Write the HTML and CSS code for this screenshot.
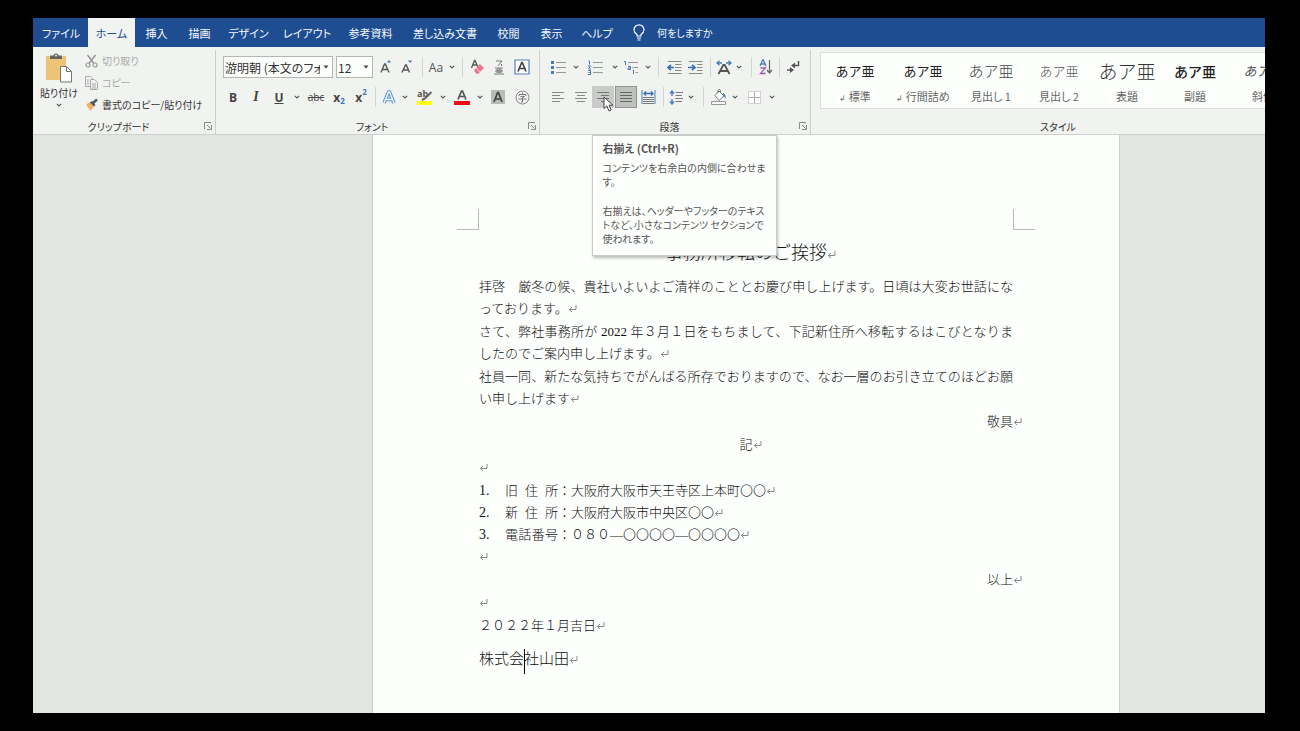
FILE: index.html
```html
<!DOCTYPE html>
<html lang="ja">
<head>
<meta charset="utf-8">
<meta name="viewport" content="width=device-width, initial-scale=1">
<title>事務所移転のご挨拶</title>
<link rel="stylesheet" href="styles.css">
</head>
<body>
<svg width="0" height="0" class="defs" aria-hidden="true">
  <symbol id="chev" viewBox="0 0 6 4"><path d="M.8 .8 3 3 5.200 .8" fill="none" stroke="#555" stroke-width="1.100"/></symbol>
  <symbol id="tri" viewBox="0 0 6 4"><path d="M.5 .5h5L3 3.500z" fill="#444"/></symbol>
  <symbol id="launch" viewBox="0 0 8 8"><path d="M.5 7V.5H7M3 3l3.500 3.500M7.500 3v4.500H3" fill="none" stroke="#888"/></symbol>
  <symbol id="ret" viewBox="0 0 9 9"><path d="M8 1v4.500H1.500M4 3 1.300 5.500 4 8" fill="none" stroke="#888" stroke-width="1"/></symbol>
</svg>
<div class="app">
  <nav class="tabs">
    <a href="#">ファイル</a><a href="#" class="active">ホーム</a><a href="#">挿入</a><a href="#">描画</a><a href="#">デザイン</a><a href="#">レイアウト</a><a href="#">参考資料</a><a href="#">差し込み文書</a><a href="#">校閲</a><a href="#">表示</a><a href="#">ヘルプ</a>
    <a href="#" class="tell"><svg width="12" height="17" viewBox="0 0 12 17"><path d="M4 12V10.500C2.500 9.500 1 8 1 5.800a5 5 0 0 1 10 0C11 8 9.500 9.500 8 10.500V12zM4 14h4M4.500 16h3" fill="none" stroke="#fff" stroke-width="1.200"/></svg>何をしますか</a>
  </nav>

  <div class="ribbon">
    <section class="group clipboard">
      <div class="clip-body">
        <button class="paste"><svg width="28" height="30" viewBox="0 0 28 30"><rect x="1" y="3" width="20" height="24" rx="1" fill="#ecc477"/><path d="M5 6V2.500h3.500a2.500 2 0 0 1 5 0H17V6z" fill="#666"/><circle cx="11" cy="2.500" r="1" fill="#eee"/><path d="M15.500 13.500h6l5 5v10.500h-11z" fill="#fff" stroke="#777"/><path d="M21.500 13.500v5h5" fill="none" stroke="#777"/></svg><span>貼り付け</span><svg width="6" height="4"><use href="#chev"/></svg></button>
        <div class="clip-list">
          <button class="dim"><svg width="13" height="14" viewBox="0 0 13 14"><path d="M2.500 1 9 9.500M10.500 1 4 9.500" stroke="#999" stroke-width="1.600"/><circle cx="3" cy="11" r="2" fill="none" stroke="#999" stroke-width="1.200"/><circle cx="10" cy="11" r="2" fill="none" stroke="#999" stroke-width="1.200"/></svg>切り取り</button>
          <button class="dim"><svg width="13" height="14" viewBox="0 0 13 14"><path d="M.5.500h5l2 2v8h-7z" fill="none" stroke="#aaa"/><path d="M5.500 3.500h4l3 3v7h-7z" fill="#f1f3f1" stroke="#aaa"/><path d="M7 8h4M7 10h4M7 12h4M2 4h2M2 6h2M2 8h2" fill="none" stroke="#aaa"/></svg>コピー</button>
          <button><svg width="13" height="14" viewBox="0 0 13 14"><path d="M1 6.500 5 4l4 4.500L5.500 13z" fill="#efb064"/><path d="M5 4.500 7 3l3.500 4L9 8.500z" fill="#555"/><path d="M8 5 12 1.500" stroke="#555" stroke-width="2.500"/></svg>書式のコピー/貼り付け</button>
        </div>
      </div>
      <footer><span>クリップボード</span><button aria-label="クリップボードの設定"><svg width="8" height="8"><use href="#launch"/></svg></button></footer>
    </section>

    <section class="group font">
      <div class="row font-1">
        <div class="combo face"><select aria-label="フォント"><option>游明朝 (本文のフォント)</option></select><svg width="6" height="4"><use href="#tri"/></svg></div>
        <div class="combo size"><select aria-label="フォント サイズ"><option>12</option></select><svg width="6" height="4"><use href="#tri"/></svg></div>
        <button aria-label="拡大"><svg width="14" height="16" viewBox="0 0 14 16"><path d="M2 13.500 5.500 5h.8L10 13.500M3.300 10.500h5.300" fill="none" stroke="#555" stroke-width="1.400"/><path d="M8 3.500 10 1l2 2.500z" fill="#3f75b5"/></svg></button>
        <button aria-label="縮小"><svg width="14" height="16" viewBox="0 0 14 16"><path d="M2 13.500 5.500 6h.8L9.500 13.500M3.300 11h5" fill="none" stroke="#555" stroke-width="1.400"/><path d="M8 1.500h4L10 4z" fill="#3f75b5"/></svg></button>
        <i class="sep"></i>
        <button class="aa">Aa<svg width="6" height="4"><use href="#chev"/></svg></button>
        <i class="sep"></i>
        <button aria-label="書式クリア"><svg width="15" height="16" viewBox="0 0 15 16"><path d="M1.500 9 4.500 1.500h.5L8 8M2.700 6h4" fill="none" stroke="#555" stroke-width="1.300"/><path d="m4 11 6-6 4 4-6 6-2-.5z" fill="#e8788d"/><path d="m6 9 4 4" stroke="#f9cdd5"/></svg></button>
        <button aria-label="ルビ"><svg width="10" height="16" viewBox="0 0 10 16"><path d="M2 2h6L4 7M7.500 5v2M1 9h8M2 11h6v2H2zM4 9v5M6 9v5M0 15h10" fill="none" stroke="#777"/></svg></button>
        <button aria-label="囲み線"><svg width="16" height="16" viewBox="0 0 16 16"><path d="M1 1h14v14H1z" fill="#fff" stroke="#5480b6" stroke-width="1.200"/><path d="M4 12.500 7.700 3.500h.6L12 12.500M5.500 9.500h5" fill="none" stroke="#444" stroke-width="1.700"/></svg></button>
      </div>
      <div class="row font-2">
        <button class="b">B</button><button class="it">I</button><button class="un">U</button>
        <button aria-label="下線の種類"><svg width="6" height="4"><use href="#chev"/></svg></button>
        <button class="strike">abc</button><button class="x">x<sub>2</sub></button><button class="x">x<sup>2</sup></button>
        <i class="sep"></i>
        <button aria-label="文字の効果"><svg width="14" height="15" viewBox="0 0 14 15"><path d="M2 13 6.500 2h1L12 13M4 9.500h6" fill="none" stroke="#5f97d6" stroke-width="3.400" stroke-linejoin="round"/><path d="M2 13 6.500 2h1L12 13M4 9.500h6" fill="none" stroke="#f5f9ff" stroke-width="1.300"/></svg></button>
        <button aria-label="効果の種類"><svg width="6" height="4"><use href="#chev"/></svg></button>
        <button class="hl" aria-label="蛍光ペン"><svg width="16" height="18" viewBox="0 0 16 18"><rect y="13" width="15" height="4" fill="#ffff12"/><text x="0" y="9" font-size="9" font-weight="700" fill="#555">ab</text><path d="M14.500 4 8 10.500 5 12" fill="none" stroke="#666" stroke-width="2"/></svg></button>
        <button aria-label="蛍光ペンの色"><svg width="6" height="4"><use href="#chev"/></svg></button>
        <button aria-label="フォントの色"><svg width="16" height="16" viewBox="0 0 16 16"><rect x="0" y="12" width="16" height="4" fill="#ef0b14"/><path d="M4 10.500 7.500 2h1L12 10.500M5.500 7.500h5" fill="none" stroke="#555" stroke-width="1.700"/></svg></button>
        <button aria-label="色の選択"><svg width="6" height="4"><use href="#chev"/></svg></button>
        <button aria-label="網かけ"><svg width="14" height="14" viewBox="0 0 14 14"><path d="M0 0h14v14H0z" fill="#b9bbb9"/><path d="M3 12 6.600 2.500h.8L11 12M4.500 9h5" fill="none" stroke="#444" stroke-width="1.700"/></svg></button>
        <button aria-label="囲い文字"><svg width="15" height="15" viewBox="0 0 15 15"><circle cx="7.500" cy="7.500" r="6.500" fill="none" stroke="#888"/><path d="M7.500 2.500V4M4 6V4.500h7V6M5.500 6.500h4L7.500 8v4H6M3.500 9h8" fill="none" stroke="#777"/></svg></button>
      </div>
      <footer><span>フォント</span><button aria-label="フォントの設定"><svg width="8" height="8"><use href="#launch"/></svg></button></footer>
    </section>

    <section class="group para">
      <div class="row para-1">
        <button aria-label="箇条書き"><svg width="15" height="15" viewBox="0 0 15 15"><path d="M0 1h3v3H0zM0 6h3v3H0zM0 11h3v3H0z" fill="#4a7ab5"/><path d="M5 2.500h10M5 7.500h10M5 12.500h10" stroke="#999"/></svg></button>
        <button aria-label="行頭文字"><svg width="6" height="4"><use href="#chev"/></svg></button>
        <button aria-label="段落番号"><svg width="15" height="15" viewBox="0 0 15 15"><path d="M.5 1h1v3.500M0 6h2.500L.5 9H3M0 10.500h2.500v4H0M.5 12.500h2" fill="none" stroke="#4a7ab5"/><path d="M5 2.500h10M5 7.500h10M5 12.500h10" stroke="#999"/></svg></button>
        <button aria-label="番号の種類"><svg width="6" height="4"><use href="#chev"/></svg></button>
        <button aria-label="アウトライン"><svg width="16" height="15" viewBox="0 0 16 15"><path d="M0 1.500h1.500V5M4 6.500h2.500v3H4V8h2M9.500 10v4" fill="none" stroke="#4a7ab5"/><path d="M4 2.500h10M8.500 7.500H14M11.500 12.500H14" stroke="#999"/></svg></button>
        <button aria-label="アウトラインの種類"><svg width="6" height="4"><use href="#chev"/></svg></button>
        <i class="sep"></i>
        <button aria-label="インデントを減らす"><svg width="15" height="13" viewBox="0 0 15 13"><path d="M1 .5h13.500M8 3.500h6.500M8 6.500h6.500M8 9.500h6.500M1 12.500h13.500" stroke="#888"/><path d="M7 6.500H2M4 3.800 1 6.500l3 2.700" fill="none" stroke="#356fb4" stroke-width="1.700"/></svg></button>
        <button aria-label="インデントを増やす"><svg width="15" height="13" viewBox="0 0 15 13"><path d="M1 .5h13.500M9 3.500h5.500M9 6.500h5.500M9 9.500h5.500M1 12.500h13.500" stroke="#888"/><path d="M0 6.500h6M4 3.800 7 6.500 4 9.200" fill="none" stroke="#356fb4" stroke-width="1.700"/></svg></button>
        <i class="sep"></i>
        <button aria-label="拡張書式"><svg width="16" height="15" viewBox="0 0 16 15"><path d="M2.500 14 7.300 5h1.400L13.500 14M4.500 11h7" fill="none" stroke="#555" stroke-width="1.800"/><path d="M6 3H2M3.500.8 1 3l2.500 2.200M10 3h4M12.500.8 15 3l-2.500 2.200" fill="none" stroke="#4a7fbd" stroke-width="1.400"/></svg></button>
        <button aria-label="拡張書式の種類"><svg width="6" height="4"><use href="#chev"/></svg></button>
        <i class="sep"></i>
        <button aria-label="並べ替え"><svg width="14" height="16" viewBox="0 0 14 16"><path d="M1 7 3.700 1h.6L7 7M2 5h4" fill="none" stroke="#4a7fbd" stroke-width="1.300"/><path d="M1.500 9h5L1.500 14.500h5" fill="none" stroke="#9a5cb5" stroke-width="1.300"/><path d="M10.500 1v13M8 11l2.500 3 2.500-3" fill="none" stroke="#666" stroke-width="1.200"/></svg></button>
        <i class="sep"></i>
        <button aria-label="編集記号"><svg width="14" height="14" viewBox="0 0 14 14"><path d="M12.500 1v4.500H8" fill="none" stroke="#555" stroke-width="1.500"/><path d="M9 2.500v6l-4-3zM4 7v6l4-3z" fill="#555"/><path d="M1 10h4" stroke="#555" stroke-width="1.500"/></svg></button>
      </div>
      <div class="row para-2">
        <button aria-label="左揃え"><svg width="12" height="10" viewBox="0 0 12 10"><path d="M0 .5h12M0 3.500h8M0 6.500h12M0 9.500h8" stroke="#888"/></svg></button>
        <button aria-label="中央揃え"><svg width="12" height="10" viewBox="0 0 12 10"><path d="M0 .5h12M2 3.500h8M0 6.500h12M2 9.500h8" stroke="#888"/></svg></button>
        <div class="tip-anchor">
          <button class="hover" aria-label="右揃え" aria-describedby="tip"><svg width="12" height="10" viewBox="0 0 12 10"><path d="M0 .5h12M4 3.500h8M0 6.500h12M4 9.500h8" stroke="#777"/></svg></button>
          <svg class="pointer" width="11" height="16" viewBox="0 0 11 16"><path d="M1 1v11.500l2.800-2.600L6 15l2.200-1L6 9.200h4z" fill="#fff" stroke="#444"/></svg>
          <div class="tip" id="tip" role="tooltip">
            <b>右揃え (Ctrl+R)</b>
            <p>コンテンツを右余白の内側に合わせま<br>す。</p>
            <p>右揃えは、ヘッダーやフッターのテキス<br>トなど、小さなコンテンツ セクションで<br>使われます。</p>
          </div>
        </div>
        <button class="on" aria-label="両端揃え"><svg width="12" height="10" viewBox="0 0 12 10"><path d="M0 .5h12M0 3.500h12M0 6.500h12M0 9.500h12" stroke="#666"/></svg></button>
        <button aria-label="均等割り付け"><svg width="15" height="15" viewBox="0 0 15 15"><path d="M1 0v14M14 0v14" stroke="#4a7fbd"/><path d="M3 3.500h9M5 1.500l-2 2 2 2M10 1.500l2 2-2 2" fill="none" stroke="#356fb4" stroke-width="1.300"/><path d="M2 7.500h11M2 9.500h11M2 11.500h11M2 13.500h11" stroke="#777"/></svg></button>
        <i class="sep"></i>
        <button aria-label="行間"><svg width="14" height="15" viewBox="0 0 14 15"><path d="M3 1v5M3 9v5M1 3.500 3 1l2 2.500M1 11.500 3 14l2-2.500" fill="none" stroke="#4a7fbd" stroke-width="1.400"/><path d="M6.500 2.500H14M6.500 5.500H13M6.500 8.500H14M6.500 11.500H13" stroke="#777"/></svg></button>
        <button aria-label="行間の種類"><svg width="6" height="4"><use href="#chev"/></svg></button>
        <i class="sep"></i>
        <button aria-label="塗りつぶし"><svg width="16" height="16" viewBox="0 0 16 16"><path d="M4 6.500 8 2l5 5-5 4.500zM7 4V1.500a1.300 1.300 0 0 1 2.500 0V4" fill="#fff" stroke="#777"/><path d="M12 4c2.500 1 3 3 2.500 6-1-2-1.500-3-2.500-3z" fill="#4a7fbd"/><path d="M.5 12.500h14v3H.5z" fill="#fff" stroke="#999"/></svg></button>
        <button aria-label="塗りつぶしの色"><svg width="6" height="4"><use href="#chev"/></svg></button>
        <button aria-label="罫線"><svg width="13" height="13" viewBox="0 0 13 13"><path d="M.5.500h12v12H.5z" fill="#fff" stroke="#aaa" stroke-dasharray="1 1"/><path d="M6.500 1v11M1 6.500h11" stroke="#aaa"/></svg></button>
        <button aria-label="罫線の種類"><svg width="6" height="4"><use href="#chev"/></svg></button>
      </div>
      <footer><span>段落</span><button aria-label="段落の設定"><svg width="8" height="8"><use href="#launch"/></svg></button></footer>
    </section>

    <section class="group styles">
      <div class="gallery">
        <button><span class="sample">あア亜</span><span><small>↲</small> 標準</span></button>
        <button><span class="sample">あア亜</span><span><small>↲</small> 行間詰め</span></button>
        <button><span class="sample head">あア亜</span><span>見出し 1</span></button>
        <button><span class="sample light">あア亜</span><span>見出し 2</span></button>
        <button><span class="sample title">あア亜</span><span>表題</span></button>
        <button><span class="sample subtitle">あア亜</span><span>副題</span></button>
        <button><span class="sample slant">あア亜</span><span>斜体</span></button>
      </div>
      <footer><span>スタイル</span></footer>
    </section>
  </div>

  <main class="workspace">
    <article class="page">
      <div class="crops"><i class="crop left"></i><i class="crop right"></i></div>
      <h1>事務所移転のご挨拶<svg class="ret"><use href="#ret"/></svg></h1>
      <p>拝啓　厳冬の候、貴社いよいよご清祥のこととお慶び申し上げます。日頃は大変お世話になっております。<svg class="ret"><use href="#ret"/></svg></p>
      <p>さて、弊社事務所が 2022 年３月１日をもちまして、下記新住所へ移転するはこびとなりましたのでご案内申し上げます。<svg class="ret"><use href="#ret"/></svg></p>
      <p>社員一同、新たな気持ちでがんばる所存でおりますので、なお一層のお引き立てのほどお願い申し上げます<svg class="ret"><use href="#ret"/></svg></p>
      <p class="end">敬具<svg class="ret"><use href="#ret"/></svg></p>
      <p class="mid">記<svg class="ret"><use href="#ret"/></svg></p>
      <p><svg class="ret"><use href="#ret"/></svg></p>
      <ol>
        <li><span class="num">1.</span><span><span class="spread">旧 住 所</span>：大阪府大阪市天王寺区上本町〇〇<svg class="ret"><use href="#ret"/></svg></span></li>
        <li><span class="num">2.</span><span><span class="spread">新 住 所</span>：大阪府大阪市中央区〇〇<svg class="ret"><use href="#ret"/></svg></span></li>
        <li><span class="num">3.</span><span><span class="spread">電話番号</span>：０８０―〇〇〇〇―〇〇〇〇<svg class="ret"><use href="#ret"/></svg></span></li>
      </ol>
      <p><svg class="ret"><use href="#ret"/></svg></p>
      <p class="end">以上<svg class="ret"><use href="#ret"/></svg></p>
      <p><svg class="ret"><use href="#ret"/></svg></p>
      <p>２０２２年１月吉日<svg class="ret"><use href="#ret"/></svg></p>
      <p class="sign">株式会<span class="caret"></span>社山田<svg class="ret"><use href="#ret"/></svg></p>
    </article>
  </main>
</div>
</body>
</html>
```
FILE: styles.css
```css
* { box-sizing: border-box; }
html, body { height: 100%; }
body {
  margin: 0;
  padding: 18px 35px 18px 33px;
  background: #000;
  font-family: "Noto Sans CJK JP", "Noto Sans", sans-serif;
  font-size: 11px;
  color: #333;
}
.defs { position: absolute; }
button, select { font: inherit; color: inherit; margin: 0; }
button { border: 0; padding: 0; background: none; }
.app {
  height: 100%;
  display: flex;
  flex-direction: column;
  overflow: hidden;
  background: #e3e5e3;
}

/* Tab strip */
.tabs {
  flex: none;
  display: grid;
  grid-template-columns: 54px 47px 43px 43px 55px 62px 65px 84px 43px 43px 48px auto;
  height: 29px;
  padding-left: 1px;
  background: #1e4e91;
  font-feature-settings: "palt";
}
.tabs a {
  display: flex;
  align-items: center;
  justify-content: center;
  color: #f4f7fb;
  text-decoration: none;
  white-space: nowrap;
}
.tabs .active { background: #f1f3f1; color: #1e4e91; }
.tabs .tell { justify-content: flex-start; gap: 12px; padding-left: 12px; font-size: 10px; }

/* Ribbon */
.ribbon {
  flex: none;
  display: flex;
  height: 88px;
  padding-top: 3px;
  background: #f1f3f1;
  border-bottom: 1px solid #cfd1cf;
}
.group {
  flex: none;
  display: flex;
  flex-direction: column;
  border-right: 1px solid #cdcfcd;
}
.group footer {
  display: flex;
  align-items: center;
  height: 16px;
  margin-top: auto;
  font-size: 10px;
  font-feature-settings: "palt";
}
.group footer span { flex: 1; text-align: center; }
.group footer button { width: 11px; display: flex; }
.clipboard { width: 183px; }
.font { width: 324px; }
.para { width: 271px; }
.styles { flex: 1; min-width: 0; border: 0; }

.clip-body { display: flex; font-size: 10px; font-feature-settings: "palt"; }
.paste {
  width: 52px;
  height: 62px;
  padding-top: 3px;
  display: flex;
  flex-direction: column;
  align-items: center;
  gap: 3px;
  line-height: 14px;
  white-space: nowrap;
}
.clip-list { display: flex; flex-direction: column; }
.clip-list button {
  display: flex;
  align-items: center;
  gap: 4px;
  height: 22px;
  line-height: 22px;
  white-space: nowrap;
}
.clip-list .dim { color: #a8aaa8; }

.row { display: grid; height: 30px; align-items: center; }
.row button {
  display: flex;
  align-items: center;
  justify-content: center;
  height: 22px;
}
.font .row { margin-left: 7px; }
.para .row { margin-left: 5px; }
.font-1, .para-1 { margin-top: 2px; }
.font-1 { grid-template-columns: 113px 40px 20px 22px 8px 32px 8px 22px 22px 23px; }
.font-2 { grid-template-columns: 20px 26px 20px 16px 22px 24px 20px 8px 19px 14px 26px 10px 28px 8px 28px 21px; }
.para-1 { grid-template-columns: 26px 10px 28px 12px 22px 10px 11px 20px 23px 6px 22px 8px 16px 14px 12px 16px; }
.para-2 { grid-template-columns: 26px 19px 25px 22px 23px 6px 20px 10px 14px 17px 16px 22px 14px; }
.sep { justify-self: center; width: 1px; height: 20px; background: #d3d5d3; }
.combo { position: relative; }
.combo select {
  display: block;
  width: 100%;
  height: 22px;
  padding: 0 12px 0 1px;
  border: 1px solid #b5b7b5;
  border-radius: 0;
  background: #fdfffd;
  appearance: none;
  font-size: 12px;
  font-feature-settings: "palt";
}
.combo svg { position: absolute; right: 4px; top: 9px; }
.face { width: 110px; }
.size { width: 37px; }
.aa { gap: 6px; font-family: "Open Sans", sans-serif; font-size: 12px; color: #555; }
.b, .it, .un, .x, .strike { font-family: "Open Sans", sans-serif; font-size: 12px; font-weight: 700; color: #444; }
.row .it { font-family: "Liberation Serif", serif; font-style: italic; font-size: 14px; }
.un { text-decoration: underline; }
.row .strike { text-decoration: line-through; font-size: 10px; font-weight: 400; }
.x sub, .x sup { font-size: 8px; color: #3f75b5; line-height: 8px; }
.x sub { align-self: flex-end; padding-bottom: 3px; }
.x sup { align-self: flex-start; padding-top: 2px; }
.hl svg { overflow: visible; }
.hl text { font-family: "Open Sans", sans-serif; }
.tip-anchor { position: relative; justify-self: center; }
.tip-anchor .hover { width: 22px; background: #c9cbc9; }
.row .on { background: #bfc1bf; border: 1px solid #929492; }
.pointer { position: absolute; left: 11px; top: 10px; z-index: 3; }
.tip {
  position: absolute;
  z-index: 2;
  left: 0;
  top: 49px;
  width: 185px;
  height: 121px;
  padding: 5px 10px;
  background: #fdfffd;
  border: 1px solid #c8cac8;
  box-shadow: 1px 2px 3px #0004;
  color: #555;
  font-size: 10px;
  line-height: 14px;
  white-space: nowrap;
  font-feature-settings: "palt";
}
.tip b { display: block; margin-bottom: 6px; font-size: 11px; }
.tip p { margin: 0 0 15px; }

.gallery {
  display: flex;
  height: 57px;
  margin: 2px 0 0 9px;
  overflow: hidden;
  background: #fdfffd;
  border: 1px solid #dcdedc;
  border-right: 0;
}
.gallery button {
  flex: none;
  width: 68px;
  display: flex;
  flex-direction: column;
  align-items: center;
  color: #666;
  line-height: 16px;
  white-space: nowrap;
  font-feature-settings: "palt";
}
.gallery small { font-size: 8px; }
.sample { height: 35px; line-height: 36px; font-size: 13px; color: #222; font-feature-settings: normal; }
.sample.head { font-size: 15px; font-weight: 300; color: #444; }
.sample.light { font-weight: 300; color: #555; }
.sample.title { font-size: 19px; font-weight: 300; color: #333; }
.sample.subtitle { font-size: 14px; font-weight: 500; }
.sample.slant { font-style: italic; color: #555; }
.styles footer { padding-left: 40px; }

/* Document */
.workspace {
  flex: 1;
  min-height: 0;
  display: grid;
  grid-template-columns: 340fr 746fr 146fr;
}
.page {
  grid-column: 2;
  padding: 74px 106px 0;
  background: #fdfffd;
  box-shadow: 0 0 0 1px #cfd1cf;
  font-family: "Liberation Serif", "Noto Sans CJK JP", serif;
  font-size: 13px;
  font-weight: 300;
  line-height: 22px;
  color: #111;
  text-align: justify;
}
.crops { display: flex; justify-content: space-between; margin: 0 -22px; }
.crop { width: 22px; height: 21px; border: 0 solid #b8bab8; border-bottom-width: 1px; }
.crop.left { border-right-width: 1px; }
.crop.right { border-left-width: 1px; }
.page h1 {
  margin: 5px 0;
  font-size: 18px;
  font-weight: 300;
  line-height: 36px;
  text-align: center;
}
.page p { margin: 0 0 1px; }
.page .end { text-align: right; }
.page .mid { text-align: center; }
.page ol { margin: 0; padding: 0; list-style: none; }
.page li { display: flex; }
.num { width: 26px; font-size: 14px; }
.spread { display: inline-block; width: 53px; text-align: justify; text-align-last: justify; }
.ret { width: 9px; height: 9px; margin-right: -9px; }
.page .sign { font-size: 15px; line-height: 42px; }
.caret { position: relative; }
.caret::after {
  content: "";
  position: absolute;
  left: 0;
  top: -2px;
  width: 1px;
  height: 25px;
  background: #000;
}
```
